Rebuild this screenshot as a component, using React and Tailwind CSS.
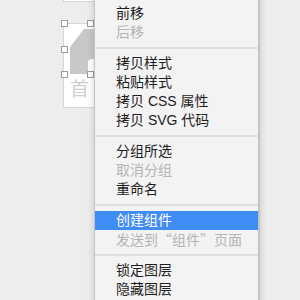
const items = [
  { t: "前移" },
  { t: "后移", off: true },
  { sep: true },
  { t: "拷贝样式" },
  { t: "粘贴样式" },
  { t: "拷贝 CSS 属性" },
  { t: "拷贝 SVG 代码" },
  { sep: true },
  { t: "分组所选" },
  { t: "取消分组", off: true },
  { t: "重命名" },
  { sep: true },
  { t: "创建组件", on: true },
  { t: "send", off: true },
  { sep: true },
  { t: "锁定图层" },
  { t: "隐藏图层" },
];

function Handle({ x, y }) {
  return (
    <div
      className="absolute w-[7px] h-[7px] bg-white border border-[#9c9c9c]"
      style={{ left: x - 3, top: y - 3 }}
    ></div>
  );
}

function Label({ t }) {
  if (t === "send") {
    return (
      <span>
        发送到<span className="font-['Noto_Sans_CJK_SC']">“组件”</span>页面
      </span>
    );
  }
  return <span>{t}</span>;
}

export default function App() {
  return (
    <div className="relative w-[300px] h-[300px] overflow-hidden bg-[#ededed] font-['Liberation_Sans','Noto_Sans_CJK_SC',sans-serif]">
      {/* canvas */}
      <div className="absolute left-[63px] top-[-6px] w-[40px] h-[8px] bg-white border border-[#d4d4d4]"></div>
      <div className="absolute left-[63px] top-[23px] w-[40px] h-[85px] bg-white border border-[#d6d6d6]">
        <svg className="absolute left-0 top-0" width="40" height="85" viewBox="0 0 40 85">
          <path d="M6 23 L20 5 L40 5 L40 35 L28 35 Q24 35 24 39 L24 50 L6 50 Z" fill="#c8c8c8" />
        </svg>
        <span className="absolute left-[6px] top-[54px] text-[19px] leading-none text-[#cfcfcf] font-['Noto_Sans_CJK_SC']">
          首
        </span>
      </div>
      <Handle x={64} y={23} />
      <Handle x={90} y={23} />
      <Handle x={64} y={49} />
      <Handle x={64} y={74} />
      <Handle x={90} y={74} />

      {/* menu */}
      <div className="absolute left-[94px] top-[-6px] w-[166px] pt-[10px] pb-[10px] bg-[#f3f3f3] border-l border-r-2 border-[#c4c4c4] shadow-[0_0_7px_rgba(0,0,0,0.18)]">
        {items.map((it, i) =>
          it.sep ? (
            <div key={i} className="mt-[5px] mb-[5px] h-[2px] bg-[#dedede]"></div>
          ) : (
            <div
              key={i}
              className={`h-[19px] flex items-center pl-[21px] text-[14px] whitespace-nowrap ${
                it.on ? "bg-[#3f8cf5] text-white" : it.off ? "text-[#b4b4b4]" : "text-[#1e1e1e]"
              }`}
            >
              <Label t={it.t} />
            </div>
          )
        )}
      </div>
    </div>
  );
}
